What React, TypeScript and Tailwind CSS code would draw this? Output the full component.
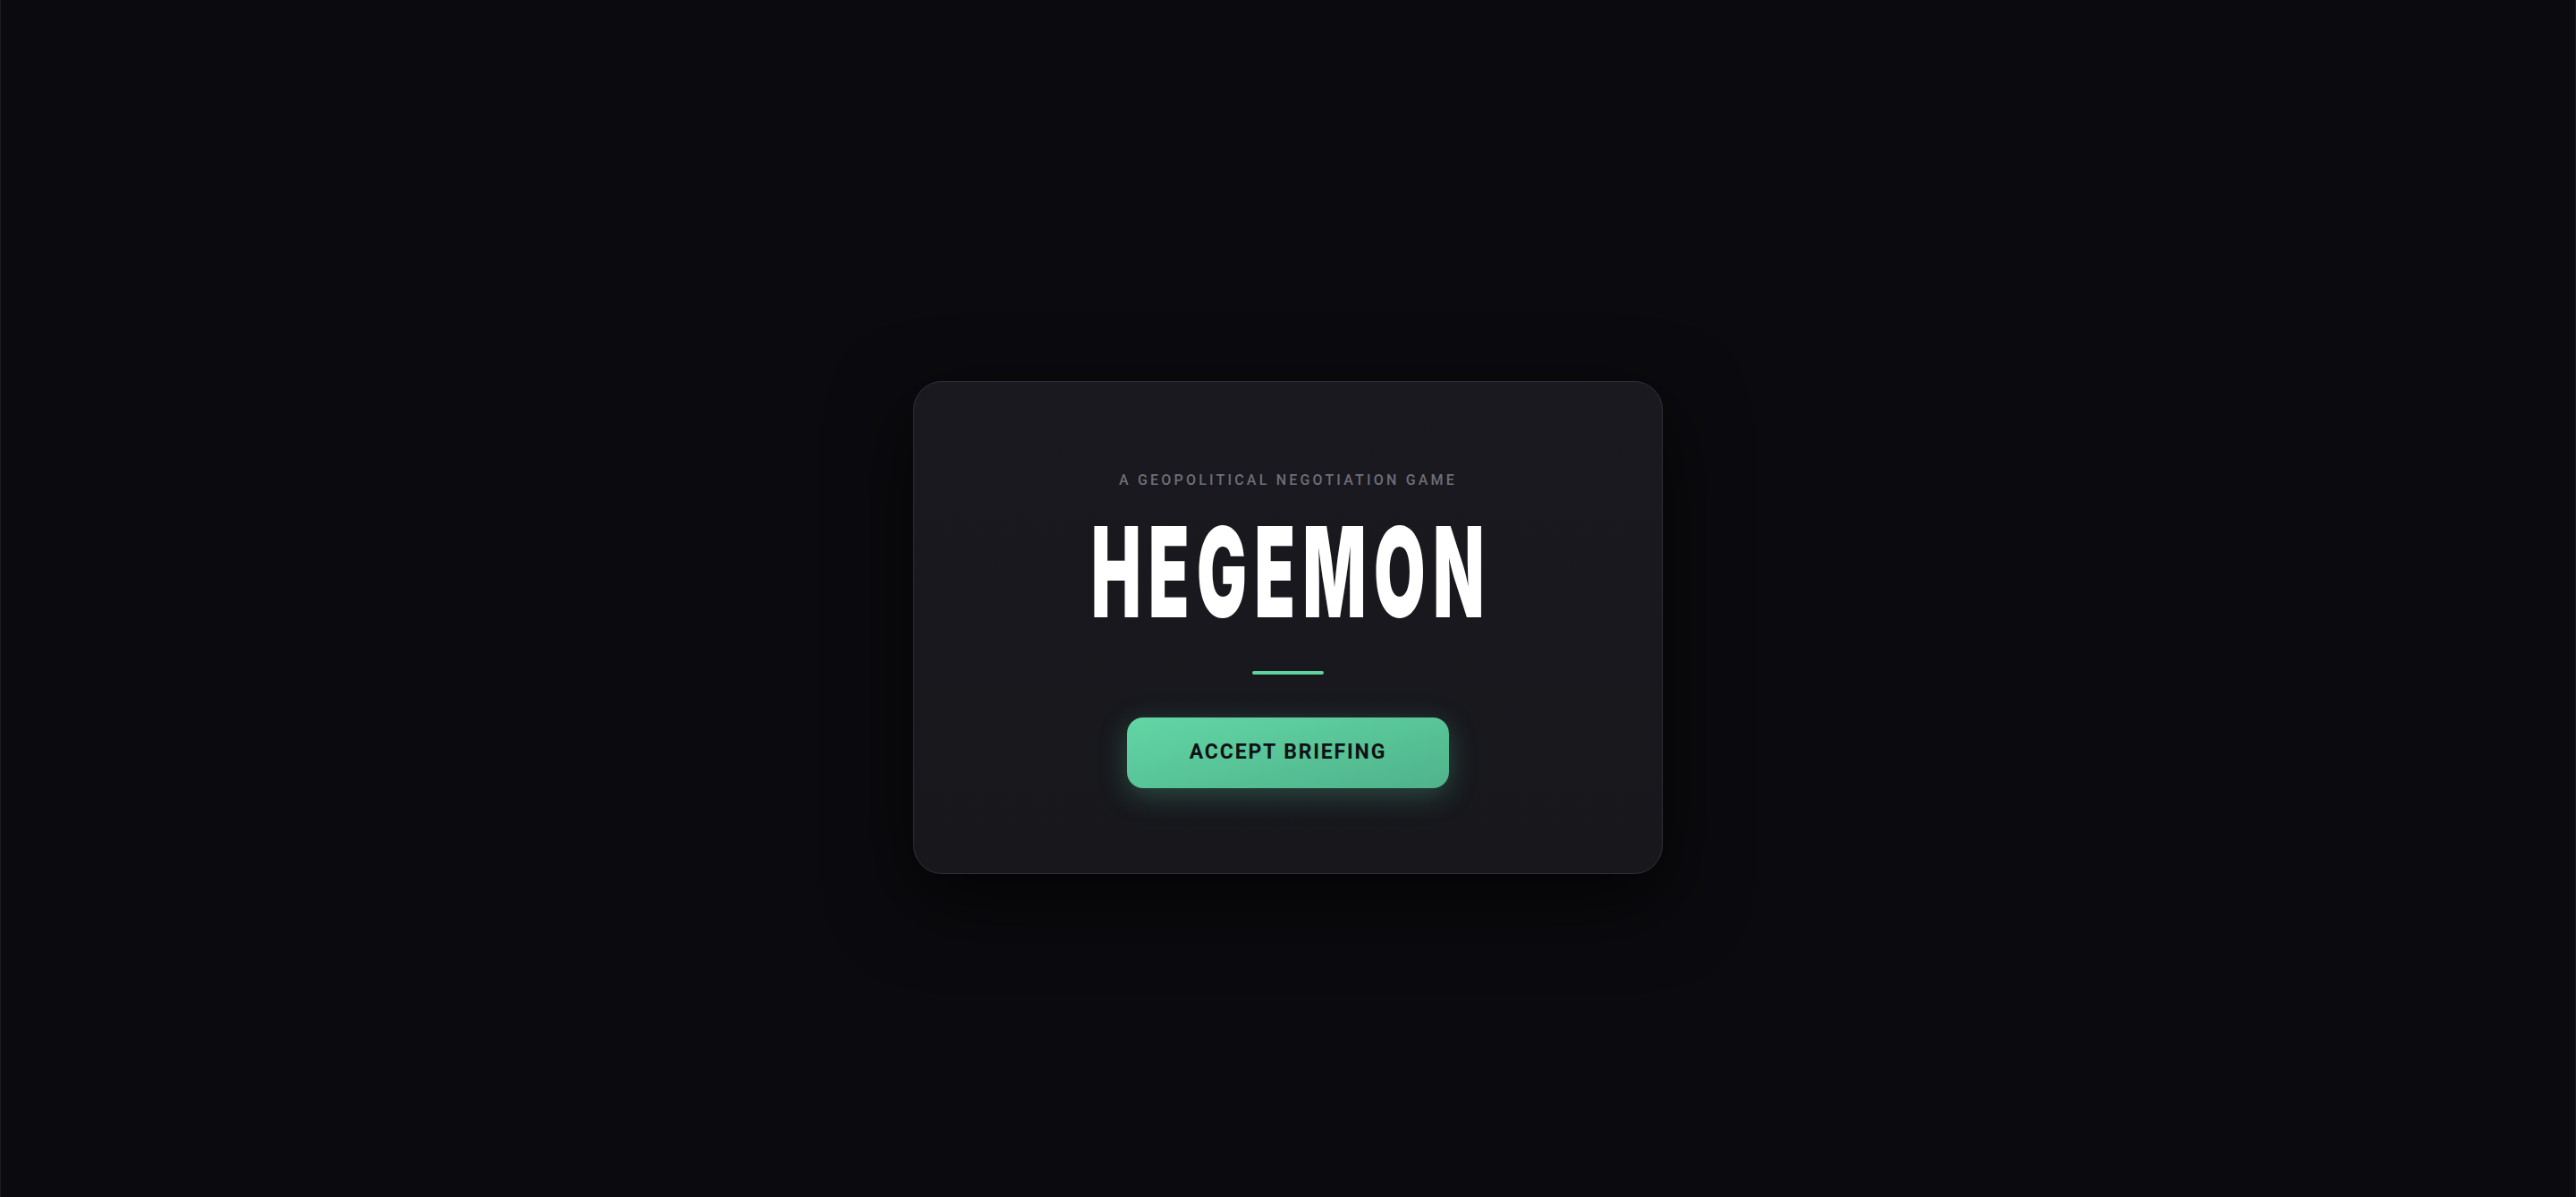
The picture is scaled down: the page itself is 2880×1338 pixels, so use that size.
import React from "react";

const App = () => {
  return (
    <div className="min-h-screen w-full bg-[#0b0b0f] flex items-center justify-center pt-[65px] border-x border-[#1c1c22] font-['Inter',sans-serif]">
      {/* CARD */}
      <div className="w-[838px] rounded-[32px] border border-[#303038] bg-gradient-to-b from-[#19191f] to-[#17171c] shadow-[0_30px_90px_rgba(0,0,0,0.7)] flex flex-col items-center pt-[98px] pb-[95px]">
        <p className="text-[16px] leading-[24px] font-medium tracking-[0.2em] text-[#6e6e76] font-['Roboto',sans-serif]">
          A GEOPOLITICAL NEGOTIATION GAME
        </p>
        <h1 className="mt-5 h-[140px] text-[140px] leading-[140px] font-black text-white tracking-[0.115em]">
          <span className="inline-block scale-x-[0.53] pl-[0.115em]">HEGEMON</span>
        </h1>
        <div className="mt-[41px] h-1 w-20 rounded-full bg-[#5ed3a0]" />
        <button className="mt-12 h-[79px] w-[360px] rounded-[18px] bg-gradient-to-br from-[#62d6a5] to-[#4fb38b] shadow-[0_8px_32px_rgba(94,211,160,0.28)] flex items-center justify-center">
          <span className="text-[23px] font-bold tracking-[0.08em] text-[#101114] font-['Roboto',sans-serif]">
            ACCEPT BRIEFING
          </span>
        </button>
      </div>
    </div>
  );
};

export default App;
